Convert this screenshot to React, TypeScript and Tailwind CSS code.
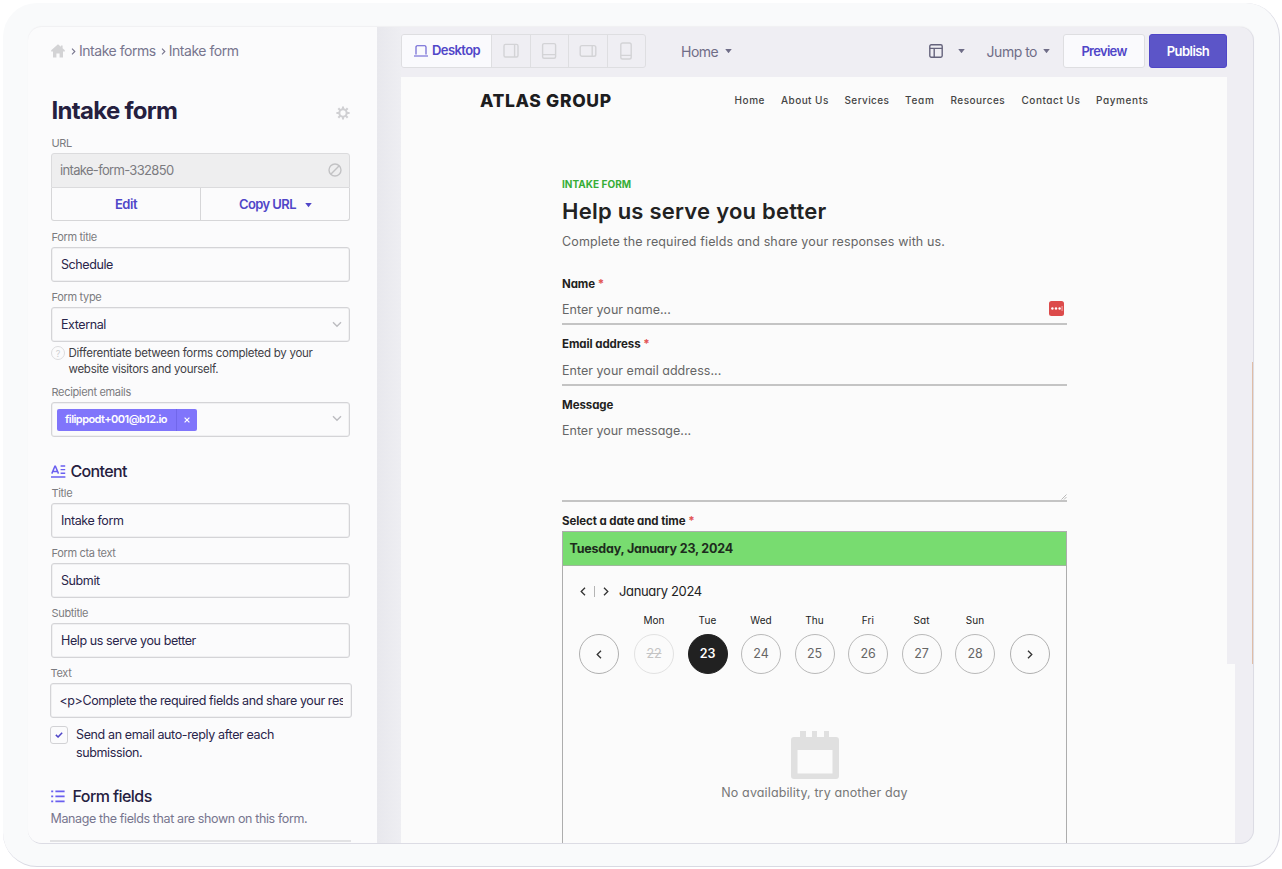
import type { ReactNode } from "react";

const Caret = ({ className = "" }: { className?: string }) => (
  <svg viewBox="0 0 8 5" className={`h-[4.5px] w-[7px] shrink-0 ${className}`}>
    <path d="M0.3 0h7.4L4 4.8z" fill="currentColor" />
  </svg>
);

const ChevronDown = () => (
  <svg viewBox="0 0 10 7" className="mr-[7px] mb-[3px] h-[7px] w-[10px]" fill="none" stroke="#bcbcc0" strokeWidth="1.4">
    <path d="M1 1.2l4 4 4-4" />
  </svg>
);

const Chevron = ({ dir }: { dir: "left" | "right" }) => (
  <svg viewBox="0 0 6 9" className="h-[9px] w-[6px]" fill="none" stroke="#333" strokeWidth="1.3">
    <path d={dir === "left" ? "M5 0.7L1.2 4.5L5 8.3" : "M1 0.7l3.8 3.8L1 8.3"} />
  </svg>
);

const Label = ({ children }: { children: ReactNode }) => (
  <div className="h-5 pl-[0.5px] text-[11px] leading-5 tracking-[-0.33px] text-[#7b7b80]">{children}</div>
);

const Box = ({ children, className = "" }: { children: ReactNode; className?: string }) => (
  <div
    className={`flex h-[35px] items-center justify-between rounded-[3px] border border-[#d4d4d7] bg-[#fbfbfc] pt-[2px] text-[12.5px] tracking-[-0.4px] text-[#29254a] shadow-[inset_0_0_0_0.5px_#e6e6e8] ${className}`}
  >
    {children}
  </div>
);

const Field = ({ label, value }: { label: string; value: string }) => (
  <div className="mb-[5px]">
    <Label>{label}</Label>
    <Box className="px-[9px]">{value}</Box>
  </div>
);

function Sidebar() {
  return (
    <aside className="flex h-full w-[349px] shrink-0 flex-col bg-[#fbfbfc] pr-[27px] pl-[23px]">
      <div className="flex h-[47px] shrink-0 items-center text-[14px] text-[#77758e]">
        <svg viewBox="0 0 14 14" className="mr-[6px] h-[14px] w-[14px]" fill="#d3d3d5">
          <path d="M7 0.3L0.2 6.2V7.4H2V13.6H5.4V9.4H8.6V13.6H12V7.4H13.8V6.2L11.6 4.3V1.4H9.9V2.8z" />
        </svg>
        <svg viewBox="0 0 5 8" className="mt-px mr-[3px] h-[7px] w-[5px]" fill="none" stroke="#77758e" strokeWidth="1.3">
          <path d="M0.8 0.8L4 4L0.8 7.2" />
        </svg>
        <span className="tracking-[-0.47px]">Intake forms</span>
        <svg viewBox="0 0 5 8" className="mt-px mr-[3px] ml-[5px] h-[7px] w-[5px]" fill="none" stroke="#77758e" strokeWidth="1.3">
          <path d="M0.8 0.8L4 4L0.8 7.2" />
        </svg>
        <span className="tracking-[-0.45px]">Intake form</span>
      </div>

      <div className="mt-[19px] flex h-9 shrink-0 items-center justify-between">
        <h1 className="pl-[0.5px] text-[24px] font-bold tracking-[-0.7px] text-[#25203f]">Intake form</h1>
        <svg viewBox="0 0 14 14" className="mt-1 h-[14px] w-[14px]" fill="none" stroke="#d0d0d3">
          <circle cx="7" cy="7" r="3.7" strokeWidth="2.1" />
          <path
            strokeWidth="2.1"
            d="M7 0.4V3M7 11v2.6M0.4 7H3M11 7h2.6M2.33 2.33l1.84 1.84M9.83 9.83l1.84 1.84M2.33 11.67l1.84-1.84M9.83 4.17l1.84-1.84"
          />
        </svg>
      </div>

      <div className="mt-1">
        <Label>URL</Label>
        <div className="flex h-[35px] items-center justify-between rounded-t-[3px] border border-[#dbdbdd] bg-[#eeeeef] pr-[7px] pl-[8px] text-[13px] text-[#7b7b80]">
          <span className="tracking-[-0.67px]">intake-form-332850</span>
          <svg viewBox="0 0 14 14" className="mb-px h-[14px] w-[14px]" fill="none" stroke="#c2c2c4" strokeWidth="1.4">
            <circle cx="7" cy="7" r="6" />
            <path d="M2.8 11.2L11.2 2.8" />
          </svg>
        </div>
        <div className="mb-[6px] flex h-[33px] rounded-b-[3px] border border-t-0 border-[#d6d6d8] text-[13px] font-semibold text-[#5046c8]">
          <div className="flex w-[149px] items-center justify-center border-r border-[#d6d6d8] pt-px tracking-[-0.5px]">
            Edit
          </div>
          <div className="flex grow items-center justify-center pt-px pl-px tracking-[-0.6px]">
            Copy URL
            <Caret className="mt-0.5 ml-[9px]" />
          </div>
        </div>
      </div>

      <Field label="Form title" value="Schedule" />
      <Label>Form type</Label>
      <Box className="pl-[9px]">
        External
        <ChevronDown />
      </Box>
      <div className="mt-[3px] mb-[5px] flex text-[11.5px] leading-4 tracking-[-0.27px] text-[#414046]">
        <div className="mt-px mr-[3.5px] flex h-[14px] w-[14px] shrink-0 items-center justify-center rounded-full border border-[#dcdcde] text-[9px] leading-none text-[#cfcfd2]">
          ?
        </div>
        <p className="whitespace-nowrap">
          Differentiate between forms completed by your
          <br />
          website visitors and yourself.
        </p>
      </div>
      <Label>Recipient emails</Label>
      <Box className="pt-0 pb-[2px] pl-[5px]">
        <div className="flex h-[22px] items-center rounded-[2px] bg-[#8075fb] text-[11px] font-semibold text-white">
          <span className="w-[118.5px] pl-[8px] tracking-[-0.54px]">filippodt+001@b12.io</span>
          <span className="flex h-full w-[21.5px] items-center justify-center border-l border-[#7167ea]">
            <svg viewBox="0 0 6 6" className="h-[6px] w-[6px]" stroke="white" strokeWidth="1.2">
              <path d="M0.6 0.6l4.8 4.8M5.4 0.6L0.6 5.4" />
            </svg>
          </span>
        </div>
        <ChevronDown />
      </Box>

      <div className="mt-[22px] flex h-6 shrink-0 items-center text-[16px] font-medium tracking-[-0.64px] text-[#25203f]">
        <svg viewBox="0 0 15 13" className="mr-[4.5px] h-[13px] w-[15px]" fill="none" stroke="#6a5ff0">
          <path strokeWidth="1.5" d="M0.8 8.6L3.9 1.2h0.5l3.1 7.4M2 6.4h4.4" />
          <path strokeWidth="1.4" d="M9.6 1h4.6M9.6 4.6h4.6M9.6 8.2h4.6M0 12h14.4" />
        </svg>
        Content
      </div>
      <Field label="Title" value="Intake form" />
      <Field label="Form cta text" value="Submit" />
      <Field label="Subtitle" value="Help us serve you better" />
      <div className="-mr-[2px] -ml-px">
        <Label>Text</Label>
        <Box className="px-[8.5px]">
          <span className="block w-full overflow-hidden whitespace-nowrap">
            &lt;p&gt;Complete the required fields and share your responses with us.&lt;/p&gt;
          </span>
        </Box>
      </div>
      <div className="mt-[8px] -ml-px flex text-[12.5px] leading-[17.5px] tracking-[-0.37px] text-[#29254a]">
        <div className="mr-[8px] flex h-[18px] w-[18px] shrink-0 items-center justify-center rounded-[3px] border border-[#d2d2d5]">
          <svg viewBox="0 0 9 7" className="h-[6px] w-[8px]" fill="none" stroke="#5046c8" strokeWidth="1.8">
            <path d="M0.8 3.4L3.4 5.8L8.2 0.9" />
          </svg>
        </div>
        <p>
          Send an email auto-reply after each
          <br />
          submission.
        </p>
      </div>
      <div className="mt-[23px] -ml-px flex h-6 shrink-0 items-center text-[16px] font-medium tracking-[-0.57px] text-[#25203f]">
        <svg viewBox="0 0 14 13" className="mr-[8px] ml-[0.5px] h-[13px] w-[14px]" fill="none" stroke="#6a5ff0" strokeWidth="1.6">
          <path d="M0.2 1.4h2M4.4 1.4h9.2M0.2 6.4h2M4.4 6.4h9.2M0.2 11.4h2M4.4 11.4h9.2" />
        </svg>
        Form fields
      </div>
      <p className="mt-[2px] -ml-px pl-[0.5px] text-[12.5px] leading-[18px] tracking-[-0.38px] whitespace-nowrap text-[#77758e]">
        Manage the fields that are shown on this form.
      </p>
      <div className="mt-[12px] -ml-px h-[1.5px] w-[301px] shrink-0 bg-[#e2e2e4]" />
    </aside>
  );
}

const Device = ({ children }: { children: ReactNode }) => (
  <div className="flex grow items-center justify-center border-l border-[#dedee1]">
    <svg viewBox="0 0 18 18" className="h-[18px] w-[18px]" fill="none" stroke="#d3d3d6" strokeWidth="1.4">
      {children}
    </svg>
  </div>
);

function Toolbar() {
  return (
    <div className="flex h-[50px] shrink-0 items-start pt-[7px] pr-[26px] text-[14px] text-[#6f6d87]">
      <div className="flex h-[34px] w-[245px] rounded-[3px] border border-[#dedee1]">
        <div className="flex w-[89px] items-center rounded-l-[2px] bg-[#fafafd] pl-[12px] text-[13px] font-semibold tracking-[-0.59px] text-[#5046c8]">
          <svg viewBox="0 0 14 12" className="mr-[4px] h-[12px] w-[14px]" fill="none" stroke="#5f55d0" strokeWidth="1.1">
            <path d="M2 9.4V1.9Q2 0.8 3.1 0.8H10.9Q12 0.8 12 1.9V9.4M0 11h14" />
          </svg>
          Desktop
        </div>
        <Device>
          <rect x="2" y="2.4" width="14" height="12.6" rx="1.5" />
          <path d="M12.6 2.4v12.6" />
        </Device>
        <Device>
          <rect x="2.6" y="1.6" width="13" height="14.6" rx="1.5" />
          <path d="M2.6 12.6h13" />
        </Device>
        <Device>
          <rect x="1.2" y="3.6" width="15.6" height="10.6" rx="1.8" />
          <path d="M13.2 3.6v10.6" />
        </Device>
        <Device>
          <rect x="3.8" y="1" width="10.4" height="16" rx="1.8" />
          <path d="M3.8 13.4h10.4" />
        </Device>
      </div>
      <div className="ml-[35px] flex h-[34px] items-center tracking-[-0.5px]">
        Home
        <Caret className="ml-[7px]" />
      </div>
      <div className="grow" />
      <div className="flex h-[34px] items-center tracking-[-0.5px]">
        <svg viewBox="0 0 14 14" className="mr-[15px] h-[14px] w-[14px]" fill="none" stroke="#65637c" strokeWidth="1.4">
          <rect x="0.8" y="0.8" width="12.4" height="12.4" rx="1.4" />
          <path d="M0.8 4.4h12.4M5.2 4.4v8.8" />
        </svg>
        <Caret className="mr-[22px]" />
        Jump to
        <Caret className="mr-[13px] ml-[6px]" />
      </div>
      <div className="flex h-[34px] w-[82px] items-center justify-center rounded-[3px] border border-[#dedee1] bg-[#fafafd] pt-px text-[13px] font-semibold tracking-[-0.7px] text-[#5046c8]">
        Preview
      </div>
      <div className="ml-[4px] flex h-[34px] w-[78px] items-center justify-center rounded-[3px] border border-[#5046c8] bg-[#5c55c8] pt-px text-[13px] font-semibold tracking-[-0.55px] text-white">
        Publish
      </div>
    </div>
  );
}

function SiteHeader() {
  return (
    <div className="flex h-[47px] shrink-0 items-center pl-[79px] text-[10px] font-medium text-[#444]">
      <div className="w-[254.5px] pt-px text-[17.5px] font-extrabold tracking-[0.66px] text-[#1d1d1f]">ATLAS GROUP</div>
      <span className="w-[46.5px] tracking-[0.58px]">Home</span>
      <span className="w-[63.5px] tracking-[0.44px]">About Us</span>
      <span className="w-[60.5px] tracking-[0.4px]">Services</span>
      <span className="w-[45.5px] tracking-[0.7px]">Team</span>
      <span className="w-[71px] tracking-[0.48px]">Resources</span>
      <span className="w-[74.5px] tracking-[0.54px]">Contact Us</span>
      <span className="tracking-[0.6px]">Payments</span>
    </div>
  );
}

const Required = () => <span className="text-[#e25555]"> *</span>;

const FormLabel = ({ children }: { children: ReactNode }) => (
  <div className="h-5 text-[11.5px] leading-5 font-bold tracking-[-0.08px] text-[#1f1f21]">{children}</div>
);

const days: [string, string][] = [
  ["Mon", "22"],
  ["Tue", "23"],
  ["Wed", "24"],
  ["Thu", "25"],
  ["Fri", "26"],
  ["Sat", "27"],
  ["Sun", "28"],
];

const dayStyle = (n: string) =>
  n === "22"
    ? "border-[#e2e2e2] text-[#c4c4c4] line-through"
    : n === "23"
      ? "border-[#212121] bg-[#212121] font-semibold text-white"
      : "border-[#b9b9b9] text-[#666]";

function Calendar() {
  return (
    <div className="flex h-[320px] shrink-0 flex-col border border-[#adadad] text-[#222]">
      <div className="flex h-[34px] shrink-0 items-center border-b border-[#9fb89c] bg-[#78dc70] px-[6.5px] pt-px text-[12.5px] font-bold tracking-[-0.2px] text-[#1d2b1d]">
        Tuesday, January 23, 2024
      </div>
      <div className="mt-[15px] flex h-5 items-center pl-[17px] text-[13px] tracking-[-0.35px]">
        <Chevron dir="left" />
        <span className="mx-[8px] h-[11px] w-px bg-[#b4b4b4]" />
        <Chevron dir="right" />
        <span className="ml-[10px] pt-px">January 2024</span>
      </div>
      <div className="mt-[11px] flex items-end pl-[16px]">
        <div className="mr-[15px] flex h-[40px] w-[40px] items-center justify-center rounded-full border border-[#b0b0b0]">
          <Chevron dir="left" />
        </div>
        {days.map(([name, n]) => (
          <div key={n} className="mr-[13.5px] flex w-[40px] flex-col items-center">
            <span className="mb-[6px] text-[10px] leading-4 tracking-[0.1px]">{name}</span>
            <span
              className={`flex h-[40px] w-[40px] items-center justify-center rounded-full border pt-px text-[12.5px] tracking-[-0.1px] ${dayStyle(n)}`}
            >
              {n}
            </span>
          </div>
        ))}
        <div className="ml-[1px] flex h-[40px] w-[40px] items-center justify-center rounded-full border border-[#b0b0b0]">
          <Chevron dir="right" />
        </div>
      </div>
      <div className="mt-[56px] flex flex-col items-center">
        <svg viewBox="0 0 48 50" className="h-[50px] w-[48px]" fill="#e0e0e0">
          <path
            fillRule="evenodd"
            d="M9 1h6v6h6V1h5v6h7V1h5v6h7q3 0 3 3v36q0 3-3 3H3q-3 0-3-3V10q0-3 3-3h6zM6.5 20v23.5h35V20z"
          />
        </svg>
        <p className="mt-[3px] text-[12.5px] leading-5 tracking-[0.13px] text-[#777]">No availability, try another day</p>
      </div>
    </div>
  );
}

function IntakeForm() {
  return (
    <div className="ml-[161px] flex w-[505px] flex-col pt-[52px] text-[12.5px] text-[#666]">
      <div className="h-4 text-[10px] leading-4 font-bold tracking-[0.03px] text-[#37ad37]">INTAKE FORM</div>
      <h2 className="mt-[3px] h-8 text-[22px] leading-8 font-semibold tracking-[0.24px] text-[#222]">
        Help us serve you better
      </h2>
      <p className="mt-[5px] h-5 leading-5 tracking-[0.13px]">
        Complete the required fields and share your responses with us.
      </p>
      <div className="mt-[22px]">
        <FormLabel>
          Name
          <Required />
        </FormLabel>
      </div>
      <div className="flex h-[31px] items-center justify-between border-b-2 border-[#c4c4c4] pt-[3px] pr-[3px] tracking-[0.03px]">
        Enter your name...
        <svg viewBox="0 0 15 15" className="mb-[3px] h-[15px] w-[15px]">
          <rect width="15" height="15" rx="2.5" fill="#dc4b4b" />
          <circle cx="3.4" cy="7.5" r="1.2" fill="white" />
          <circle cx="7" cy="7.5" r="1.2" fill="white" />
          <circle cx="10.6" cy="7.5" r="1.2" fill="white" />
          <rect x="12.6" y="5" width="0.9" height="5" fill="#f6baba" />
        </svg>
      </div>
      <div className="mt-[9px] mb-px">
        <FormLabel>
          Email address
          <Required />
        </FormLabel>
      </div>
      <div className="flex h-[31px] items-center border-b-2 border-[#c4c4c4] pt-[3px] tracking-[0.03px]">
        Enter your email address...
      </div>
      <div className="mt-[9px]">
        <FormLabel>Message</FormLabel>
      </div>
      <div className="flex h-[87px] justify-between border-b-2 border-[#c4c4c4] pt-[6px] leading-5 tracking-[0px]">
        Enter your message...
        <svg viewBox="0 0 6 6" className="h-[6px] w-[6px] self-end" stroke="#aaa" strokeWidth="0.8">
          <path d="M0.5 5.5l5-5M3 5.5L5.5 3" />
        </svg>
      </div>
      <div className="mt-[9px]">
        <FormLabel>
          Select a date and time
          <Required />
        </FormLabel>
      </div>
      <Calendar />
    </div>
  );
}

export default function App() {
  return (
    <div className="h-[869px] w-[1282px] bg-white pt-[3px] pl-[3px] font-['Inter',sans-serif]">
      <div className="h-[864px] w-[1277px] rounded-[34px] border-r border-b border-[#d9d9e2] bg-[#f9fafb] pt-[24px] pl-[25px]">
        <div className="flex h-[817px] w-[1226px] overflow-hidden rounded-[14px] border-r border-b border-[#dcdce4] bg-[#efeef3] shadow-[0_-1px_1px_#f0f0f2]">
          <Sidebar />
          <div className="w-6 shrink-0 bg-gradient-to-r from-[#e8e8ed] to-[#eeeef2]" />
          <div className="flex grow flex-col">
            <Toolbar />
            <div className="flex grow">
              <main className="w-[826px] shrink-0 overflow-hidden bg-[#fbfbfb] [font-feature-settings:'cv11']">
                <SiteHeader />
                <IntakeForm />
              </main>
              <div className="flex grow flex-col">
                <div className="h-[285px]" />
                <div className="h-[302px] border-r border-[#e0bda6]" />
                <div className="grow border-l-8 border-[#fbfbfb]" />
              </div>
            </div>
          </div>
        </div>
      </div>
    </div>
  );
}
